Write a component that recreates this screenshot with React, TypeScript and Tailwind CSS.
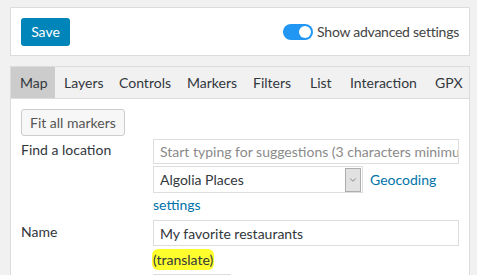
import { ChevronDown } from 'lucide-react';

const TABS = [
  { label: 'Map', w: 'w-[44px]' },
  { label: 'Layers', w: 'w-[55px]' },
  { label: 'Controls', w: 'w-[68px]' },
  { label: 'Markers', w: 'w-[66px]' },
  { label: 'Filters', w: 'w-[57px]' },
  { label: 'List', w: 'w-[40px]' },
  { label: 'Interaction', w: 'w-[85px]' },
  { label: 'GPX', w: 'w-[43px]' },
];

const font = { fontFamily: 'Lato, "Noto Sans", sans-serif' };

export default function App() {
  return (
    <div className="w-[477px] h-[275px] overflow-hidden bg-[#f1f1f1] text-[14px] text-[#32373c]" style={font}>
      <div className="ml-[10px] mt-[7px] w-[460px] h-[49px] bg-white border border-[#dcdcdc] flex items-center justify-between pl-[10px] pr-[10px]">
        <button className="h-[28px] w-[49px] rounded-[3px] bg-[#0085ba] text-white text-[14px] leading-none">
          Save
        </button>
        <div className="flex items-center gap-[4px]">
          <span className="relative w-[30px] h-[16px] rounded-full bg-[#2196f3]">
            <span className="absolute right-[2px] top-[2px] w-[12px] h-[12px] rounded-full bg-white" />
          </span>
          <span className="text-[#444] tracking-[-0.25px]">Show advanced settings</span>
        </div>
      </div>

      <div className="ml-[10px] mt-[10px] w-[460px] border border-[#dcdcdc] bg-white h-[300px]">
        <div className="flex h-[32px] bg-[#f1f1f1] border-b border-[#dcdcdc]">
          {TABS.map((t, i) => (
            <div
              key={t.label}
              className={`flex items-center shrink-0 pl-[9px] ${t.w} ${i === 0 ? 'bg-[#cccccc]' : ''}`}
            >
              {t.label}
            </div>
          ))}
        </div>

        <div className="px-[10px] pt-[10px]">
          <button className="h-[27px] px-[8px] rounded-[3px] border border-[#cccccc] bg-[#f7f7f7] text-[#555] text-[14px] leading-none">
            Fit all markers
          </button>

          <div className="flex mt-[3px]">
            <div className="w-[132px] shrink-0 pt-[2px] leading-[18px] whitespace-nowrap">Find a location</div>
            <div className="flex-1 min-w-0 flex flex-col">
              <div className="h-[25px] border border-[#dddddd] px-[6px] flex items-center text-[#8a8a8a] whitespace-nowrap overflow-hidden">
                Start typing for suggestions (3 characters minimum)
              </div>
              <div className="flex items-center mt-[2px]">
                <div className="w-[210px] h-[27px] border border-[#dddddd] flex items-center justify-between pl-[6px] pr-[1px]">
                  <span>Algolia Places</span>
                  <span className="w-[16px] h-[24px] bg-[#e1e1e1] border border-[#adadad] flex items-center justify-center">
                    <ChevronDown size={10} strokeWidth={1.5} className="text-[#555]" />
                  </span>
                </div>
                <a className="ml-[7px] text-[#0073aa]">Geocoding</a>
              </div>
              <a className="text-[#0073aa] leading-[22px] mt-[1px]">settings</a>
            </div>
          </div>

          <div className="flex mt-[4px]">
            <div className="w-[132px] shrink-0 pt-[3px] leading-[18px]">Name</div>
            <div className="flex-1 min-w-0 flex flex-col">
              <div className="h-[26px] border border-[#dddddd] px-[6px] flex items-center">
                My favorite restaurants
              </div>
              <div className="mt-[2px] h-[22px] flex items-center">
                <span className="bg-[#ffff2e] rounded-[6px] px-[1px] -ml-[1px]">(translate)</span>
              </div>
              <div className="mt-[4px] w-[78px] h-[24px] border border-[#dddddd]" />
            </div>
          </div>
        </div>
      </div>
    </div>
  );
}
